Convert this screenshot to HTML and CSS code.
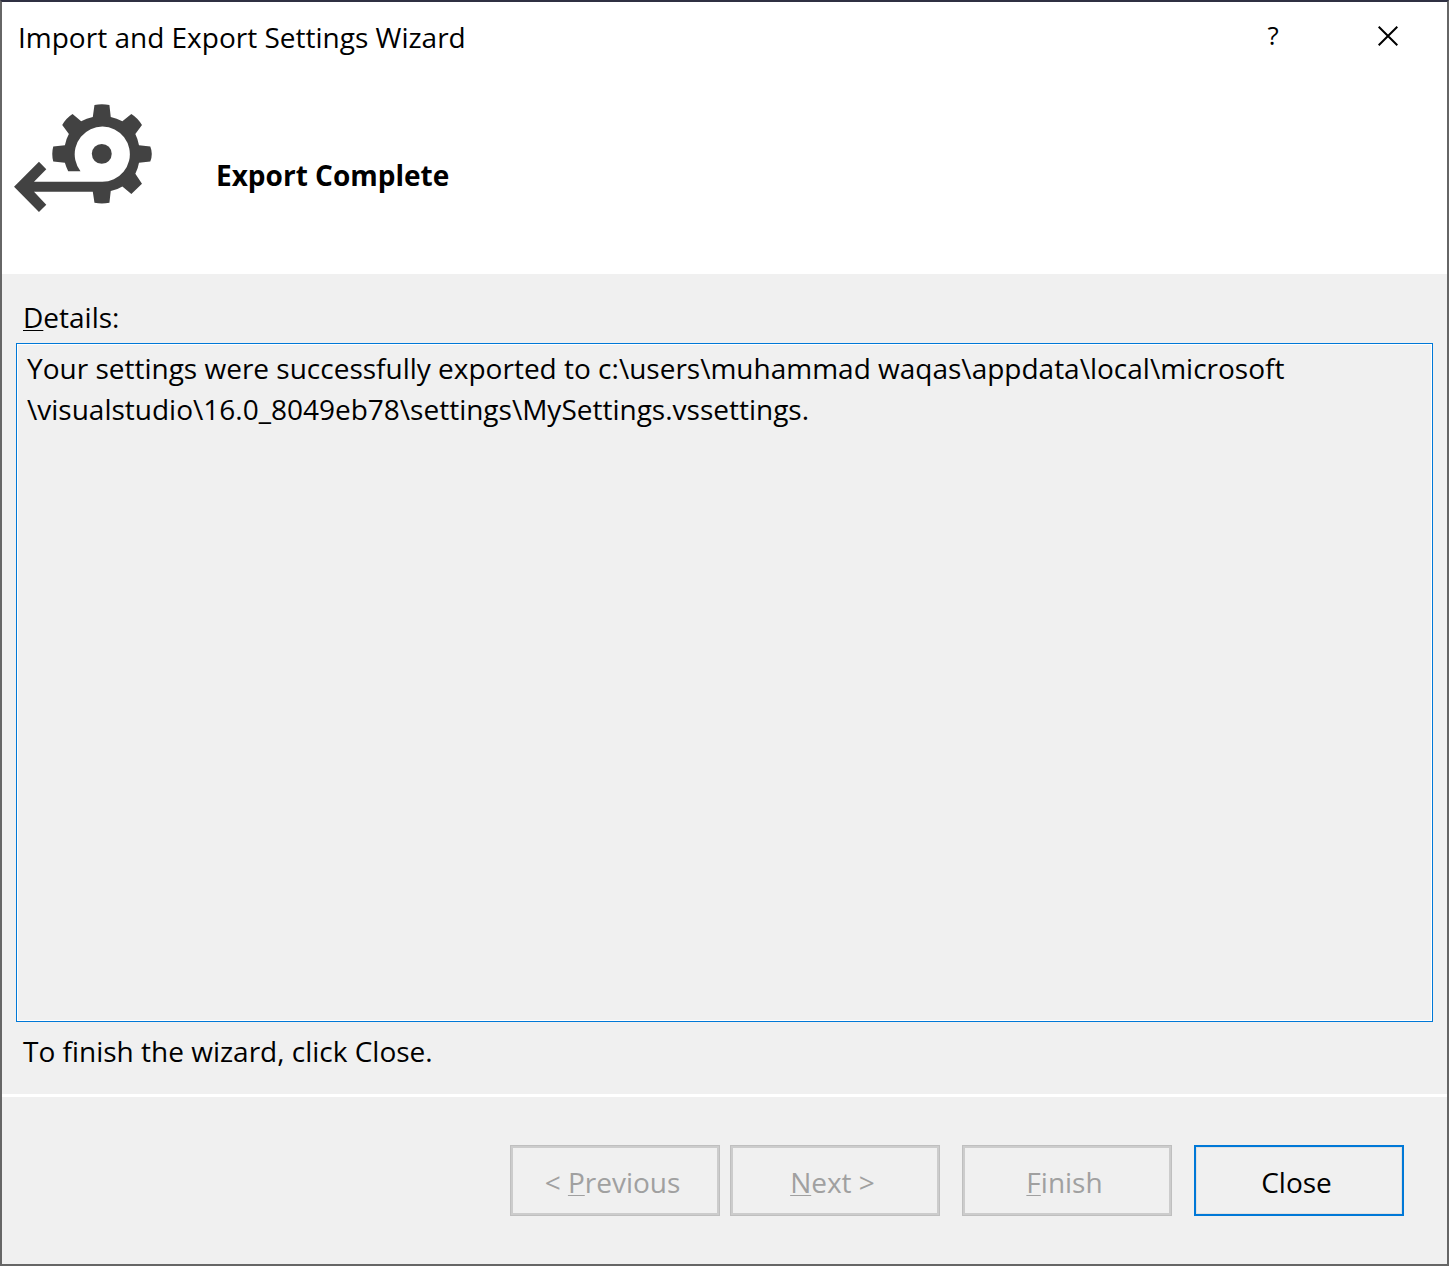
FILE: index.html
```html
<!DOCTYPE html>
<html lang="en">
<head>
<meta charset="utf-8">
<title>Import and Export Settings Wizard</title>
<link rel="stylesheet" href="styles.css">
</head>
<body>
<main class="dialog">
  <header class="titlebar">
    <h1 class="title">Import and Export Settings Wizard</h1>
    <button class="caption-button help-button" type="button" aria-label="Help">?</button>
    <button class="caption-button" type="button" aria-label="Close window">
      <svg class="close-icon" viewBox="0 0 20 20" aria-hidden="true"><path d="M.7 .7 19.3 19.3M19.3 .7 .7 19.3"/></svg>
    </button>
  </header>
  <section class="banner">
    <svg class="banner-icon" viewBox="42 42 415 325" aria-hidden="true">
      <path d="M306 276H102L139 238L117 216L42 291L117 367L139 345L102 306H279L284 339Q306 344 329 339L333 304Q352 300 368 290L395 313L427 282L407 252Q415 237 418 219L452 215Q461 192 452 170L418 166Q415 148 407 132L427 105Q414 84 395 72L368 94Q351 85 333 81L329 45Q306 40 284 45L279 81Q260 85 244 94L218 72Q198 85 187 105L207 132Q198 148 195 166L160 170Q154 192 160 215L195 219Q199 233 205 244H242A83 83 0 1 1 306 276Z"/>
      <circle cx="306" cy="192" r="30"/>
    </svg>
    <h2 class="banner-title">Export Complete</h2>
  </section>
  <section class="content">
    <label class="details-label" for="details"><u>D</u>etails:</label>
    <textarea class="details" id="details" readonly>Your settings were successfully exported to c:\users\muhammad waqas\appdata\local\microsoft
\visualstudio\16.0_8049eb78\settings\MySettings.vssettings.</textarea>
    <p class="hint">To finish the wizard, click Close.</p>
  </section>
  <footer class="actions">
    <div class="step-buttons">
      <button class="button" type="button" disabled>&lt; <u>P</u>revious</button>
      <button class="button" type="button" disabled><u>N</u>ext &gt;</button>
    </div>
    <button class="button" type="button" disabled><u>F</u>inish</button>
    <button class="button button-default" type="button">Close</button>
  </footer>
</main>
</body>
</html>
```
FILE: styles.css
```css
* { box-sizing: border-box; }

body {
  margin: 0;
  font: 28px/41px "Open Sans", "Noto Sans", sans-serif;
  color: #000;
}

button, textarea { font: inherit; color: inherit; }

u {
  text-decoration-thickness: 1px;
  text-underline-offset: 2px;
}

.dialog {
  display: flex;
  flex-direction: column;
  min-height: 100vh;
  border: 2px solid #666;
  border-top-color: #2f3042;
  background: #f0f0f0;
}

.titlebar {
  display: flex;
  align-items: center;
  height: 70px;
  padding-left: 16px;
  background: #fff;
}

.title {
  flex: 1;
  margin: 0;
  font-size: 28px;
  font-weight: 400;
}

.caption-button {
  display: flex;
  align-items: center;
  justify-content: center;
  width: 116px;
  height: 70px;
  padding: 0 2px 2px 0;
  border: 0;
  background: none;
}

.help-button {
  padding: 0 0 4px;
  font-size: 26px;
  font-weight: 500;
}

.close-icon {
  width: 20px;
  height: 20px;
  stroke: #000;
  stroke-width: 2;
}

.banner {
  display: flex;
  align-items: center;
  gap: 64px;
  height: 202px;
  padding: 0 12px;
  background: #fff;
}

.banner-icon {
  width: 138px;
  height: 108px;
  margin-bottom: 30px;
  fill: #424242;
}

.banner-title {
  margin: 0;
  padding-top: 4px;
  font-size: 28px;
  font-weight: 700;
}

.content {
  flex: 1;
  display: flex;
  flex-direction: column;
  padding: 23px 14px 22px;
}

.details-label { padding: 0 7px 5px; }

.details {
  flex: 1;
  width: 100%;
  padding: 4px 10px;
  border: 1px solid #0078d7;
  outline: 0;
  border-radius: 0;
  background: #f0f0f0;
  box-shadow: inset 0 0 0 1px #fff;
  resize: none;
}

.hint {
  margin: 0;
  padding: 9px 7px 0;
}

.actions {
  display: flex;
  justify-content: flex-end;
  gap: 22px;
  padding: 48px 43px;
  border-top: 3px solid #fff;
}

.step-buttons {
  display: flex;
  gap: 10px;
}

.button {
  width: 210px;
  height: 71px;
  padding: 4px 5px 0 0;
  border: 1px solid #bfbfbf;
  border-radius: 0;
  background: #f0f0f0;
  box-shadow: inset 0 0 0 2px #ccc;
}

.button:disabled { color: #a0a0a0; }

.button-default {
  border: 2px solid #0078d7;
  box-shadow: inset 0 0 0 1px #e1e1e1;
}
```
